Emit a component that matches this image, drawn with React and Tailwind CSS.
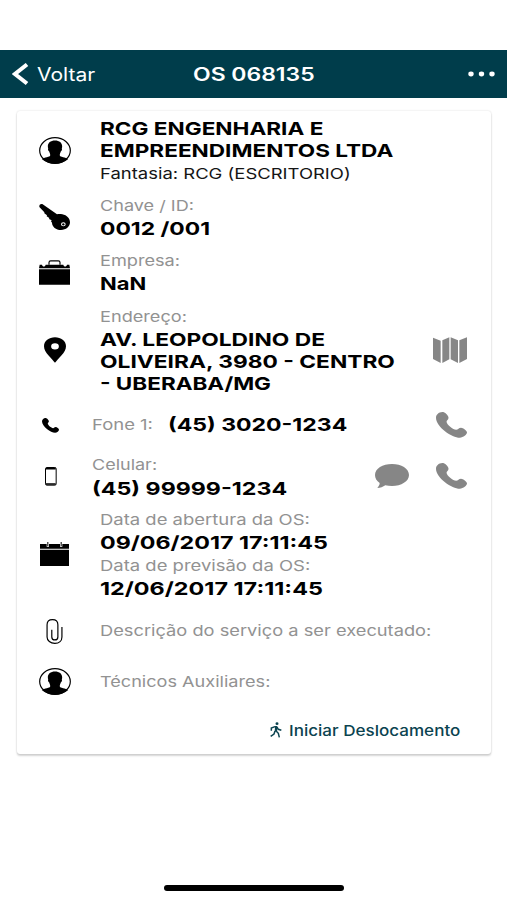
import React from 'react';
import clsx from 'clsx';

export default function App() {
  return (
    <div className="flex h-[900px] w-[507px] flex-col overflow-hidden bg-white pt-[50px] font-['Inter',sans-serif] text-black">
      <Header />

      {/* Order card */}
      <main className="mx-[17px] mt-[13px] w-[474px] rounded-[3px] bg-white pt-[7px] pb-[11px] shadow-[0_0_2px_rgba(0,0,0,0.16),0_2px_2px_rgba(0,0,0,0.16)]">
        <Row icon={<ContactIcon className="mb-[3px]" />} className="h-[68px]">
          <Value className="scale-x-[1.254]">RCG ENGENHARIA E</Value>
          <Value className="scale-x-[1.254]">EMPREENDIMENTOS LTDA</Value>
          <Label dark className="scale-x-[1.23]">Fantasia: RCG (ESCRITORIO)</Label>
        </Row>

        <Row icon={<KeyIcon />} className="mt-[8px] h-[46px]">
          <Label className="scale-x-[1.205]">Chave / ID:</Label>
          <Value className="scale-x-[1.27]">0012 /001</Value>
        </Row>

        <Row icon={<BriefcaseIcon />} className="mt-[9px] h-[46px]">
          <Label className="scale-x-[1.21]">Empresa:</Label>
          <Value className="scale-x-[1.22]">NaN</Value>
        </Row>

        <Row icon={<PinIcon />} className="mt-[10px] h-[90px]" actions={<MapIcon />}>
          <Label className="scale-x-[1.21]">Endereço:</Label>
          <Value className="scale-x-[1.264]">AV. LEOPOLDINO DE</Value>
          <Value className="scale-x-[1.264]">OLIVEIRA, 3980 - CENTRO</Value>
          <Value className="scale-x-[1.25]">- UBERABA/MG</Value>
        </Row>

        <Row
          compact
          icon={<PhoneIcon className="h-[15px] w-[17px]" />}
          className="mt-[19px] h-[22px]"
          actions={<PhoneIcon className="h-[26px] w-[31px] text-[#868686]" />}
        >
          <div className="flex h-[22px] items-center">
            <div className="w-[76px]">
              <Label className="scale-x-[1.23]">Fone 1:</Label>
            </div>
            <Value className="scale-x-[1.28]">(45) 3020-1234</Value>
          </div>
        </Row>

        <Row
          compact
          icon={<MobileIcon />}
          className="mt-[17px] h-[46px]"
          actions={
            <>
              <CommentIcon />
              <PhoneIcon className="h-[26px] w-[31px] text-[#868686]" />
            </>
          }
        >
          <Label className="scale-x-[1.2]">Celular:</Label>
          <Value className="mt-[1px] scale-x-[1.29]">(45) 99999-1234</Value>
        </Row>

        <Row icon={<CalendarIcon />} className="mt-[9px] h-[92px]">
          <Label className="scale-x-[1.23]">Data de abertura da OS:</Label>
          <Value className="scale-x-[1.292]">09/06/2017 17:11:45</Value>
          <Label className="scale-x-[1.23]">Data de previsão da OS:</Label>
          <Value className="scale-x-[1.298]">12/06/2017 17:11:45</Value>
        </Row>

        <Row icon={<AttachIcon />} className="mt-[19px] h-[24px]">
          <Label className="scale-x-[1.217]">Descrição do serviço a ser executado:</Label>
        </Row>

        <Row icon={<ContactIcon className="mb-[1px]" />} className="mt-[27px] h-[24px]">
          <Label className="scale-x-[1.207]">Técnicos Auxiliares:</Label>
        </Row>

        <button className="mt-[25px] ml-[253px] flex h-[24px] items-center text-[#0b4350]">
          <WalkIcon />
          <span className="origin-left scale-x-[1.137] text-[15px] font-medium whitespace-nowrap">
            Iniciar Deslocamento
          </span>
        </button>
      </main>

      {/* Home indicator */}
      <div className="mt-auto mb-[9px] ml-[164px] h-[6px] w-[180px] rounded-full bg-black" />
    </div>
  );
}

function Header() {
  return (
    <header className="flex h-[48px] shrink-0 items-center bg-[#003d4b] text-white">
      <svg className="ml-[12px] h-[23px] w-[17px]" viewBox="0 0 17 23" fill="none">
        <path d="M15 1.5 3 11 15 20.5" stroke="currentColor" strokeWidth="4" />
      </svg>
      <div className="ml-[8px] w-[156px]">
        <span className="block origin-left scale-x-[1.17] text-[18px] whitespace-nowrap">Voltar</span>
      </div>
      <h1 className="w-[275px] origin-left scale-x-[1.275] text-[18px] font-semibold whitespace-nowrap">
        OS 068135
      </h1>
      <svg className="h-[6px] w-[27px]" viewBox="0 0 27 6" fill="currentColor">
        <ellipse cx="3" cy="3" rx="2.7" ry="2.4" />
        <ellipse cx="13.5" cy="3" rx="2.7" ry="2.4" />
        <ellipse cx="24" cy="3" rx="2.7" ry="2.4" />
      </svg>
    </header>
  );
}

function Row({ icon, actions, compact, className, children }) {
  return (
    <section className={clsx('flex items-center', className)}>
      <div className={clsx('flex shrink-0 justify-center', compact ? 'ml-[17px] w-[33px]' : 'ml-[20px] w-[35px]')}>
        {icon}
      </div>
      <div className={clsx('min-w-0 flex-1', compact ? 'ml-[25px]' : 'ml-[28px]')}>{children}</div>
      {actions && <div className="mr-[24px] flex items-center gap-[27px]">{actions}</div>}
    </section>
  );
}

function Label({ dark, className, children }) {
  return (
    <p
      className={clsx(
        'w-max origin-left text-[15px] leading-[24px] whitespace-nowrap',
        dark ? 'text-[#151515]' : 'text-[#929292]',
        className
      )}
    >
      {children}
    </p>
  );
}

function Value({ className, children }) {
  return (
    <p className={clsx('w-max origin-left text-[18px] leading-[22px] font-bold whitespace-nowrap', className)}>
      {children}
    </p>
  );
}

function ContactIcon({ className }) {
  return (
    <svg
      className={clsx('h-[27px] w-[32px]', className)}
      viewBox="0 0 94 80"
      preserveAspectRatio="none"
      fill="currentColor"
    >
      <ellipse cx="47" cy="40" rx="45" ry="38" fill="none" stroke="currentColor" strokeWidth="3.5" />
      <path d="M47 10c13 0 21 7 21 17 0 3 0 5-1 7 2 3-1 8-3 9-1 5-3 6-3 11 0 6 18 6 25 11C76 74 62 79 47 79S18 74 8 65c7-5 25-5 25-11 0-5-2-6-3-11-2-1-5-6-3-9-1-2-1-4-1-7 0-10 8-17 21-17z" />
    </svg>
  );
}

function KeyIcon() {
  return (
    <svg className="h-[26px] w-[31px]" viewBox="0 0 93 78" fill="currentColor">
      <path
        fillRule="evenodd"
        d="M1 7c0-5 5-8 10-6l43 30c5-1 10-1 16 0 14 3 23 12 23 24 0 13-12 23-27 23S39 68 39 56l-3-4 2-3-8-4 1-3-8-5 1-3-8-6v-3L1 9zM73 55a7 6 0 1 0 0 12 7 6 0 1 0 0-12z"
      />
      <circle cx="73" cy="61" r="3.5" />
    </svg>
  );
}

function BriefcaseIcon() {
  return (
    <svg className="h-[25px] w-[31px]" viewBox="0 0 93 74" fill="currentColor">
      <path d="M30 14V7c0-4 2-5 5-5h23c3 0 5 1 5 5v7" fill="none" stroke="currentColor" strokeWidth="3.5" />
      <path d="M2 14h7c1 7 10 7 11 0h53c1 7 10 7 11 0h7l2 10H0zM0 27h93v47H0z" />
    </svg>
  );
}

function PinIcon() {
  return (
    <svg className="h-[26px] w-[22px]" viewBox="0 0 66 77" fill="currentColor">
      <path
        fillRule="evenodd"
        d="M33 0c18 0 33 11 33 27 0 20-24 36-33 50C24 63 0 47 0 27 0 11 15 0 33 0zm0 18a11 9 0 1 0 0 19 11 9 0 1 0 0-19z"
      />
    </svg>
  );
}

function MapIcon() {
  return (
    <svg className="h-[26px] w-[34px] text-[#868686]" viewBox="0 0 102 78" fill="currentColor">
      <path d="M0 2 23 11v67L0 66zM28 10l21-9v66l-21 11zM53 1l22 9v68L53 67zM79 10l23-9v65L79 78z" />
    </svg>
  );
}

function PhoneIcon({ className }) {
  return (
    <svg className={className} viewBox="0 0 94 78" preserveAspectRatio="none" fill="currentColor">
      <path d="M5 6C10 1 18-1 24 1c7 3 14 11 14 16 0 6-6 7-6 12 0 8 20 24 29 24 6 0 8-6 15-6 6 0 18 9 18 14 0 7-11 16-22 16C49 77 0 45 0 17 0 12 2 9 5 6z" />
    </svg>
  );
}

function CommentIcon() {
  return (
    <svg className="h-[24px] w-[34px] text-[#868686]" viewBox="0 0 102 72" fill="currentColor">
      <path d="M51 0c28 0 51 14 51 33S79 66 51 66c-7 0-14-1-20-2-7 5-15 8-24 8 4-5 7-9 7-15C5 51 0 42 0 33 0 14 23 0 51 0z" />
    </svg>
  );
}

function MobileIcon() {
  return (
    <svg className="h-[19px] w-[12px]" viewBox="0 0 36 57" fill="none">
      <rect x="1.5" y="1.5" width="32" height="53" rx="4" stroke="currentColor" strokeWidth="3" />
      <path d="M3 5h29M3 51h29" stroke="currentColor" strokeWidth="5" />
    </svg>
  );
}

function CalendarIcon() {
  return (
    <svg className="h-[24px] w-[29px]" viewBox="0 0 87 72" fill="currentColor">
      <path d="M0 6h20v8h7V6h33v8h7V6h20v14H0zM0 23h87v49H0z" />
      <path d="M22 0h3v12h-3zM62 0h3v12h-3z" />
    </svg>
  );
}

function AttachIcon() {
  return (
    <svg className="h-[25px] w-[17px]" viewBox="0 0 50 74" fill="none">
      <path
        d="M47 24v29c0 11-8 19-21 19S3 64 3 53V17C3 8 9 2 19 2s16 6 16 15v36c0 6-3 9-9 9s-9-3-9-9V32"
        stroke="currentColor"
        strokeWidth="3.5"
      />
    </svg>
  );
}

function WalkIcon() {
  return (
    <svg className="mr-[7px] mb-[2px] h-[16px] w-[12px]" viewBox="0 0 36 48" fill="none">
      <ellipse cx="21" cy="5" rx="4.5" ry="4" fill="currentColor" />
      <path d="M13 12h8l2 4-2 13h-7l1-13z" fill="currentColor" />
      <path
        d="M15 14 4 18v8M21 15l4 7 9 3M15 27l-3 9-10 7M19 28l6 6 3 12"
        stroke="currentColor"
        strokeWidth="4.5"
      />
    </svg>
  );
}
